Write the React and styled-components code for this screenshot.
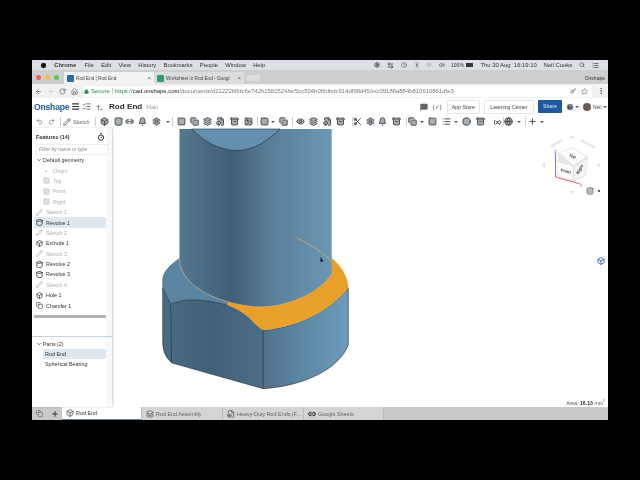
import React from 'react'
import styled, { createGlobalStyle } from 'styled-components'
import {
	ArrowLeft, ArrowRight, RotateCw, House, Lock, Key, Star, EllipsisVertical, Menu, ListChecks, Plus,
	MessageSquare, ChevronDown, Undo2, Redo2, Pencil, Box, Copy, Link2, Bell, Settings, Square, Layers,
	Cylinder, Eye, Image, Grid2x2, Clock, Archive, Globe, Timer, Search, List, ArrowLeftRight, Wifi,
	Volume2, Bluetooth, Scissors, FileBox, CircleHelp,
} from 'lucide-react'

const GlobalStyle = createGlobalStyle`
	html, body { margin: 0; padding: 0; background: #000; }
	body { font-family: 'Liberation Sans', Arial, sans-serif; }
`

const menuItems = ['File', 'Edit', 'View', 'History', 'Bookmarks', 'People', 'Window', 'Help']

// center x of every toolbar entry, the slot widths come from the gaps between them
const tools = [
	['sep', 95],
	[Box, 104], [Cylinder, 118], [Link2, 129], [Bell, 142], [Settings, 156], ['caret', 168], ['sep', 172],
	[Square, 181], [Copy, 194], [Layers, 207], [FileBox, 220], [Archive, 234], [Image, 248], ['sep', 257],
	[Grid2x2, 264], ['caret', 273], [Copy, 283], ['sep', 292],
	[Eye, 300], [Layers, 313], [FileBox, 327], [Archive, 340], ['sep', 352],
	[Scissors, 357], [Settings, 370], [Bell, 382], [Archive, 396], ['sep', 406],
	[Copy, 412], ['caret', 422], [Square, 432], [List, 446], ['caret', 456], [Clock, 466], [Archive, 480],
	['X', 496], ['sep', 503], [Globe, 508], ['caret', 519], ['sep', 525], [Plus, 532], ['caret', 542],
]

const features = [
	{ name: 'Origin', kind: 'geo', icon: 'dot' },
	{ name: 'Top', kind: 'geo', icon: 'plane' },
	{ name: 'Front', kind: 'geo', icon: 'plane' },
	{ name: 'Right', kind: 'geo', icon: 'plane' },
	{ name: 'Sketch 1', kind: 'off', icon: 'sketch' },
	{ name: 'Revolve 1', icon: 'revolve', active: true },
	{ name: 'Sketch 2', kind: 'off', icon: 'sketch' },
	{ name: 'Extrude 1', icon: 'extrude' },
	{ name: 'Sketch 3', kind: 'off', icon: 'sketch' },
	{ name: 'Revolve 2', icon: 'revolve' },
	{ name: 'Revolve 3', icon: 'revolve' },
	{ name: 'Sketch 4', kind: 'off', icon: 'sketch' },
	{ name: 'Hole 1', icon: 'extrude' },
	{ name: 'Chamfer 1', icon: 'chamfer' },
]

const FeatureIcon = ({ type }) => {
	if (type === 'dot') return <Glyph>•</Glyph>
	if (type === 'plane') return <Square size={7} color="#b9bec2" fill="#dfe2e4" strokeWidth={2} />
	if (type === 'sketch') return <Pencil size={7} color="#a7abae" strokeWidth={2.4} />
	if (type === 'revolve') return <Cylinder size={7} color="#3d4449" strokeWidth={3} />
	if (type === 'extrude') return <Box size={7} color="#3d4449" strokeWidth={2.6} />
	return <Copy size={7} color="#3d4449" strokeWidth={2.2} />
}

const App = () => {
	let last = 93.5
	return (
		<>
			<GlobalStyle />
			<Screen>
				<MenuBar>
					<Apple />
					<MenuStrong>Chrome</MenuStrong>
					{menuItems.map(name => (
						<span key={name}>{name}</span>
					))}
					<Status>
						<Settings size={6} strokeWidth={3} color="#333" />
						<ArrowLeftRight size={7} strokeWidth={2.4} color="#222" />
						<Clock size={6} color="#555" />
						<Bluetooth size={6} color="#555" />
						<Wifi size={6} color="#999" />
						<Volume2 size={6} color="#333" />
						<BatteryText>100%</BatteryText>
						<Battery />
						<StatusClock>Thu 30 Aug&nbsp; 16:19:10</StatusClock>
						<span>Neil Cooke</span>
						<Search size={6} color="#444" strokeWidth={2.4} />
						<List size={7} color="#444" strokeWidth={2.4} />
					</Status>
				</MenuBar>

				<TabStrip>
					<Lights>
						<Light $c="#ec5f57" />
						<Light $c="#f4bd4f" />
						<Light $c="#5fc453" />
					</Lights>
					<BrowserTab $active>
						<Favicon $c="#2a6aa8" />
						<TabName>Rod End | Rod End</TabName>
						<TabClose>×</TabClose>
					</BrowserTab>
					<BrowserTab>
						<Favicon $c="#2e9e6a" />
						<TabName>Worksheet in Rod End - Googl</TabName>
						<TabClose>×</TabClose>
					</BrowserTab>
					<NewTab />
					<Profile>Onshape</Profile>
				</TabStrip>

				<AddressBar>
					<ArrowLeft size={7} color="#777" strokeWidth={2.4} />
					<ArrowRight size={7} color="#c8c8c8" strokeWidth={2.4} />
					<RotateCw size={7} color="#666" strokeWidth={2.4} />
					<House size={7} color="#666" strokeWidth={2.4} />
					<UrlBox>
						<Lock size={5} color="#1d8a4a" fill="#1d8a4a" />
						<Secure>Secure</Secure>
						<UrlDivider />
						<UrlScheme>https://</UrlScheme>
						<UrlHost>cad.onshape.com</UrlHost>
						<UrlPath>/documents/d212226ffdc6e742b1560524/w/5cc504b06fdbdc914df98d45/e/c09186a884b810610861dfe3</UrlPath>
						<UrlIcons>
							<Key size={6} color="#666" strokeWidth={2.4} />
							<Star size={7} color="#666" />
						</UrlIcons>
					</UrlBox>
					<EllipsisVertical size={8} color="#666" strokeWidth={2.6} />
				</AddressBar>

				<AppHeader>
					<Logo>Onshape</Logo>
					<Menu size={9} color="#333" strokeWidth={2.8} />
					<ListChecks size={9} color="#444" strokeWidth={2} />
					<HeaderPlus>†₊</HeaderPlus>
					<DocName>Rod End</DocName>
					<Workspace>Main</Workspace>
					<HeaderRight>
						<MessageSquare size={8} color="#666" fill="#666" />
						<Braces>{'{✓}'}</Braces>
						<HeaderButton $w={33}>App Store</HeaderButton>
						<HeaderButton $w={50}>Learning Center</HeaderButton>
						<ShareButton>Share</ShareButton>
						<HelpGroup>
							<CircleHelp size={8} color="#fff" fill="#444" />
							<Caret />
						</HelpGroup>
						<UserGroup>
							<Avatar />
							<UserName>Neil</UserName>
							<Caret />
						</UserGroup>
					</HeaderRight>
				</AppHeader>

				<Toolbar>
					<Tool $w={11}><Undo2 size={7} color="#777" strokeWidth={2.4} /></Tool>
					<Tool $w={12}><Redo2 size={7} color="#777" strokeWidth={2.4} /></Tool>
					<ToolSep $w={6} />
					<SketchTool>
						<Pencil size={8} color="#444" strokeWidth={2.2} />
						<span>Sketch</span>
					</SketchTool>
					{tools.map(([T, x], i) => {
						const half = T === 'sep' ? 0.5 : T === 'caret' ? 2 : 5
						const w = x + half - last
						last = x + half
						if (T === 'sep') return <ToolSep key={i} $w={w} />
						if (T === 'caret') return <Tool key={i} $w={w}><Caret /></Tool>
						if (T === 'X') return <Tool key={i} $w={w}><Variable>(x)</Variable></Tool>
						return <Tool key={i} $w={w}><T size={9} color="#3e454a" fill="#a9aeb2" strokeWidth={2.4} /></Tool>
					})}
				</Toolbar>

				<Main>
					<FeaturePanel>
						<PanelTop>
							<FeaturesHead>
								<span>Features (14)</span>
								<Timer size={8} color="#222" strokeWidth={2.6} />
							</FeaturesHead>
							<FilterBox>Filter by name or type</FilterBox>
							<GroupRow><ChevronDown size={6} strokeWidth={2.6} />Default geometry</GroupRow>
							{features.map(f => (
								<FeatureRow key={f.name} $active={f.active} $indent={f.kind === 'geo'}>
									<IconSlot><FeatureIcon type={f.icon} /></IconSlot>
									<FeatureName $muted={f.kind}>{f.name}</FeatureName>
								</FeatureRow>
							))}
							<Rollback />
						</PanelTop>
						<PartsPanel>
							<GroupRow><ChevronDown size={6} strokeWidth={2.6} />Parts (2)</GroupRow>
							<PartRow $active>Rod End</PartRow>
							<PartRow>Spherical Bearing</PartRow>
						</PartsPanel>
					</FeaturePanel>

					<Viewport>
						<Model viewBox="112 128 496 279">
							<defs>
								<linearGradient id="cyl" x1="0" x2="1" y1="0" y2="0">
									<stop offset="0" stopColor="#54778f" />
									<stop offset="0.34" stopColor="#415f75" />
									<stop offset="0.6" stopColor="#5a7f98" />
									<stop offset="1" stopColor="#6b97b5" />
								</linearGradient>
								<linearGradient id="leftFace" x1="0" x2="1" y1="0" y2="0">
									<stop offset="0" stopColor="#496b82" />
									<stop offset="0.5" stopColor="#41607a" />
									<stop offset="1" stopColor="#4c6e86" />
								</linearGradient>
								<linearGradient id="rightFace" x1="0" x2="1" y1="0" y2="0">
									<stop offset="0" stopColor="#4f7189" />
									<stop offset="0.5" stopColor="#5f8aa6" />
									<stop offset="1" stopColor="#6c9ab8" />
								</linearGradient>
							</defs>
							{/* hex base */}
							<path d="M170.7 303.7 C178 301 186 299.5 193 299.7 C205 300 216 302 226.7 304.7 C240 310 247 315 252 321 C256 325 259 328 263.3 330.3 L263.3 388.7 L172 363 C166 358 162.7 352 162.7 341 L162.7 288 Z" fill="url(#leftFace)" stroke="#1e2f3c" strokeWidth="0.6" />
							<path d="M170.7 303.7 L171.5 363" fill="none" stroke="#1e2f3c" strokeWidth="0.6" />
							<path d="M263.3 330.3 C295 328 330 312 348.3 288 L348.3 344.7 C340 368 305 386 263.3 388.7 Z" fill="url(#rightFace)" stroke="#1e2f3c" strokeWidth="0.6" />
							<path d="M179.5 258.5 C170 265 162.7 272 162.7 280 L162.7 288 L170.7 303.7 C178 301 186 299.5 193 299.7 C205 300 216 302 226.7 304.7 L232 295 L240 280 Z" fill="#5a84a0" stroke="#1e2f3c" strokeWidth="0.4" />
							<path d="M226.7 304.7 C240 310 247 315 252 321 C256 325 259 328 263.3 330.3 C295 328 330 312 348.3 288 C348 275 340 265 331.7 258 L300 280 L232 295 Z" fill="#e9a02a" />
							{/* shaft */}
							<path d="M179.5 129 L331.7 129 L331.7 274 C318 295 285 307 260 307 C225 306 179.5 288 179.5 259 Z" fill="url(#cyl)" />
							<path d="M191.7 129 C205 143 222 150.5 236.7 150.5 C253 150.5 268 141 280 129 Z" fill="#6590ad" stroke="#1e2f3c" strokeWidth="0.6" />
							<path d="M179.5 259 C179.5 288 225 306 260 307 C285 307 318 295 331.7 274" fill="none" stroke="#c9b48c" strokeWidth="0.7" />
							<path d="M297 238 C312 245 325 254 331.7 262" fill="none" stroke="#d7a862" strokeWidth="0.8" />
							<path d="M320.5 257 L320.5 262.5 L322 261.3 L323.6 261.8 Z" fill="#111" />
						</Model>

						<ViewCube viewBox="540 130 64 70">
							<path d="M551 147 L562 140 M581 140 L595 148" stroke="#e4e6e8" strokeWidth="2.5" />
							<path d="M571.7 135 L569 138 L574.4 138 Z M542 165 L545 162 L545 168 Z M601 165 L598 162 L598 168 Z M571.7 194 L569 191 L574.4 191 Z" fill="#e0e2e4" />
							<path d="M558 153 L572 147 L588 157 L586 176 L573 182 L557 176 Z" fill="#e6e6e6" />
							<path d="M560 153 L572 148 L586 157 L573 165 Z" fill="#fbfbfb" />
							<path d="M558 162 L573 167 L572 180 L558 175 Z" fill="#fbfbfb" />
							<path d="M575 167 L587 159 L585 175 L574 180 Z" fill="#f6f6f6" />
							<CubeLabel x="572" y="157.5" transform="rotate(20 572 157.5)">Top</CubeLabel>
							<CubeLabel x="565.5" y="172.5" transform="rotate(15 565.5 172.5)">Front</CubeLabel>
							<CubeLabel x="581" y="170" transform="rotate(-60 581 170)">Right</CubeLabel>
							<path d="M555.5 153 L555.5 177" fill="none" stroke="#3a49a8" strokeWidth="0.7" />
							<path d="M555.5 177 L580 184" fill="none" stroke="#d0404a" strokeWidth="0.8" />
							<AxisZ x="555.5" y="153">Z</AxisZ>
							<AxisX x="580" y="187">X</AxisX>
						</ViewCube>
						<ViewMode>
							<Cylinder size={8} color="#666" fill="#bbb" />
							<Dot />
						</ViewMode>
						<RightTool>
							<Box size={8} color="#2a5d9a" strokeWidth={2.6} />
						</RightTool>
						<AreaLabel>Area: <b>16.13</b> mm<sup>2</sup></AreaLabel>
					</Viewport>
				</Main>

				<BottomBar>
					<BottomIcon><Copy size={7} color="#555" /></BottomIcon>
					<BottomIcon><Plus size={8} color="#333" strokeWidth={3} /></BottomIcon>
					<DocTab $w={80} $active><Box size={8} color="#333" />Rod End</DocTab>
					<DocTab $w={81}><Layers size={8} color="#444" />Rod End Assembly</DocTab>
					<DocTab $w={81}><FileBox size={8} color="#444" />Heavy-Duty Rod Ends (F...</DocTab>
					<DocTab $w={80}><Link2 size={8} color="#222" strokeWidth={3} />Google Sheets</DocTab>
				</BottomBar>
			</Screen>
		</>
	)
}

export default App

const Screen = styled.div`
	width: 576px;
	height: 360px;
	margin: 60px 32px;
	background: #fff;
	display: flex;
	flex-direction: column;
	overflow: hidden;
	filter: blur(0.4px);
	color: #333;
`
const MenuBar = styled.div`
	flex: 0 0 10px;
	display: flex;
	align-items: center;
	gap: 7.3px;
	padding-left: 9px;
	background: #dcdfe5;
	font-size: 5.8px;
	color: #333;
`
const Apple = styled.div`
	width: 5px;
	height: 5px;
	border-radius: 2px;
	margin-right: 1px;
	background: #111;
`
const MenuStrong = styled.span`
	font-weight: bold;
	margin-right: 1px;
`
const Status = styled.div`
	margin-left: auto;
	margin-right: 9px;
	display: flex;
	align-items: center;
	gap: 6.8px;
	font-size: 5.9px;
`
const BatteryText = styled.span`
	margin-left: -1px;
	font-size: 5px;
`
const Battery = styled.i`
	width: 7px;
	height: 4px;
	margin-left: -5px;
	background: #333;
`
const StatusClock = styled.span`
	margin-left: 1px;
`
const TabStrip = styled.div`
	flex: 0 0 14px;
	display: flex;
	align-items: flex-end;
	background: #cdced0;
`
const Lights = styled.div`
	display: flex;
	gap: 4px;
	width: 32px;
	padding: 0 0 4px 4px;
	box-sizing: border-box;
`
const Light = styled.i`
	width: 5px;
	height: 5px;
	border-radius: 50%;
	background: ${props => props.$c};
`
const BrowserTab = styled.div`
	width: 90px;
	height: 12px;
	display: flex;
	align-items: center;
	gap: 2px;
	padding: 0 3px;
	box-sizing: border-box;
	background: ${props => (props.$active ? '#f3f3f3' : '#dcdcdc')};
	font-size: 4.7px;
	color: #444;
`
const Favicon = styled.i`
	width: 7px;
	height: 7px;
	border-radius: 1px;
	flex: none;
	background: ${props => props.$c};
`
const TabName = styled.span`
	flex: 1;
	white-space: nowrap;
`
const TabClose = styled.span`
	color: #666;
	font-size: 6px;
`
const NewTab = styled.i`
	width: 13px;
	height: 6px;
	margin: 0 0 3px 3px;
	background: #dedede;
`
const Profile = styled.span`
	margin: 0 3px 3px auto;
	font-size: 5px;
	color: #333;
`
const AddressBar = styled.div`
	flex: 0 0 14px;
	display: flex;
	align-items: center;
	gap: 5px;
	padding: 0 3px;
	box-sizing: border-box;
	background: #f1f1f1;
`
const UrlBox = styled.div`
	flex: 1;
	height: 11px;
	display: flex;
	align-items: center;
	padding: 0 4px 0 1px;
	background: #fff;
	font-size: 5.95px;
	white-space: nowrap;
	overflow: hidden;
`
const Secure = styled.span`
	margin-left: 2px;
	color: #1d8a4a;
`
const UrlDivider = styled.i`
	width: 1px;
	height: 6px;
	margin: 0 2px;
	background: #ccc;
`
const UrlScheme = styled.span`
	color: #1d8a4a;
`
const UrlHost = styled.span`
	color: #222;
`
const UrlPath = styled.span`
	color: #777;
`
const UrlIcons = styled.div`
	margin-left: auto;
	display: flex;
	align-items: center;
	gap: 5px;
`
const AppHeader = styled.div`
	flex: 0 0 17px;
	display: flex;
	align-items: center;
	gap: 2px;
	padding: 0 1.5px 0 2px;
	box-sizing: border-box;
	background: #fff;
`
const Logo = styled.span`
	width: 35px;
	font-size: 8.6px;
	font-weight: bold;
	letter-spacing: -0.2px;
	color: #1f5a9c;
`
const HeaderPlus = styled.span`
	width: 10px;
	margin-left: 3px;
	font-size: 8px;
	color: #444;
`
const DocName = styled.span`
	margin-left: 1px;
	font-size: 8.1px;
	font-weight: bold;
	color: #2c2c2c;
`
const Workspace = styled.span`
	margin-left: 2px;
	font-size: 5.6px;
	color: #999;
`
const HeaderRight = styled.div`
	margin-left: auto;
	display: flex;
	align-items: center;
	gap: 3px;
`
const Braces = styled.span`
	font-size: 6px;
	margin: 0 1px 0 2px;
	color: #555;
`
const HeaderButton = styled.div`
	width: ${props => props.$w}px;
	height: 14px;
	line-height: 12px;
	margin-left: 1px;
	box-sizing: border-box;
	text-align: center;
	border: 1px solid #e6e6e6;
	border-radius: 1px;
	font-size: 5.2px;
	color: #444;
`
const ShareButton = styled.div`
	width: 24px;
	height: 13px;
	line-height: 13px;
	margin-left: 1px;
	text-align: center;
	border-radius: 1px;
	background: #1f5aa0;
	color: #dfe8f2;
	font-size: 5.2px;
`
const HelpGroup = styled.div`
	display: flex;
	align-items: center;
	gap: 1px;
	margin-left: 1px;
`
const UserGroup = styled.div`
	display: flex;
	align-items: center;
	gap: 1px;
	margin-left: 1px;
`
const Caret = styled.i`
	display: block;
	width: 0;
	height: 0;
	border-left: 2px solid transparent;
	border-right: 2px solid transparent;
	border-top: 2px solid #555;
`
const Avatar = styled.i`
	width: 8px;
	height: 8px;
	margin-right: 1px;
	border-radius: 50%;
	background: #6b5a55;
`
const UserName = styled.span`
	font-size: 5px;
	color: #444;
`
const Toolbar = styled.div`
	flex: 0 0 13px;
	display: flex;
	align-items: center;
	background: #fff;
`
const Tool = styled.div`
	width: ${props => props.$w}px;
	flex: none;
	display: flex;
	align-items: center;
	justify-content: flex-end;
`
const ToolSep = styled.div`
	width: ${props => props.$w}px;
	flex: none;
	height: 9px;
	background: linear-gradient(#ccc, #ccc) right center / 1px 9px no-repeat;
`
const SketchTool = styled.div`
	display: flex;
	align-items: center;
	gap: 2px;
	width: 32.5px;
	padding-left: 2px;
	box-sizing: border-box;
	flex: none;
	font-size: 5.4px;
	color: #666;
`
const Variable = styled.span`
	font-size: 6px;
	font-weight: bold;
	color: #333;
`
const Main = styled.div`
	flex: 1;
	min-height: 0;
	display: flex;
`
const FeaturePanel = styled.div`
	flex: 0 0 80px;
	display: flex;
	flex-direction: column;
	box-shadow: 1px 0 2px rgba(0, 0, 0, 0.18);
	z-index: 1;
	background: linear-gradient(to right, #fff 74px, #f7f8fa 74px);
`
const PanelTop = styled.div`
	flex: 0 0 209px;
	box-sizing: border-box;
	padding: 4px 6px 0 2px;
	border-bottom: 1px solid #c5d3de;
`
const FeaturesHead = styled.div`
	display: flex;
	align-items: center;
	justify-content: space-between;
	padding: 0 1px 0 2px;
	height: 9px;
	font-size: 5.4px;
	font-weight: bold;
	color: #333;
`
const FilterBox = styled.div`
	margin: 3px -2px 0 2px;
	height: 11px;
	line-height: 9px;
	padding-left: 2px;
	border: 1px solid #eee;
	box-sizing: border-box;
	background: #fff;
	font-size: 5px;
	font-style: italic;
	color: #8a8a8a;
`
const GroupRow = styled.div`
	display: flex;
	align-items: center;
	gap: 1px;
	height: 10.4px;
	padding-left: 2px;
	font-size: 5.4px;
	color: #333;
`
const FeatureRow = styled.div`
	display: flex;
	align-items: center;
	height: 10.4px;
	padding-left: ${props => (props.$indent ? 9 : 2)}px;
	background: ${props => (props.$active ? '#dfe8f0' : 'transparent')};
`
const IconSlot = styled.div`
	width: 10px;
	display: flex;
	align-items: center;
	flex: none;
`
const Glyph = styled.span`
	font-size: 6px;
	margin-left: 2px;
	color: #aaa;
`
const FeatureName = styled.span`
	font-size: 5.4px;
	color: ${props => (props.$muted ? '#a8acaf' : '#333')};
`
const Rollback = styled.div`
	height: 3px;
	margin-top: 4px;
	background: #b3b3b3;
`
const PartsPanel = styled.div`
	flex: 1;
	padding: 2px 6px 0 2px;
`
const PartRow = styled.div`
	margin-left: 9px;
	padding-left: 2px;
	height: 10px;
	line-height: 10px;
	font-size: 5.4px;
	color: #333;
	background: ${props => (props.$active ? '#dfe8f0' : 'transparent')};
`
const Viewport = styled.div`
	flex: 1;
	position: relative;
	background: #fff;
`
const Model = styled.svg`
	display: block;
	width: 100%;
	height: 100%;
`
const ViewCube = styled.svg`
	position: absolute;
	left: 428px;
	top: 2px;
	width: 64px;
	height: 70px;
`
const CubeLabel = styled.text`
	font-size: 4px;
	font-weight: bold;
	text-anchor: middle;
	fill: #333;
`
const AxisZ = styled.text`
	font-size: 4px;
	text-anchor: middle;
	fill: #3a49a8;
`
const AxisX = styled.text`
	font-size: 4px;
	fill: #d0404a;
`
const ViewMode = styled.div`
	position: absolute;
	left: 474px;
	top: 59px;
	display: flex;
	align-items: center;
	gap: 4px;
`
const Dot = styled.i`
	width: 2px;
	height: 2px;
	background: #222;
	border-radius: 50%;
`
const RightTool = styled.div`
	position: absolute;
	right: 3px;
	top: 129px;
	display: flex;
`
const AreaLabel = styled.div`
	position: absolute;
	right: 3px;
	bottom: 1px;
	font-size: 5.2px;
	color: #555;
	sup { font-size: 3.5px; line-height: 0; }
	b { color: #333; }
`
const BottomBar = styled.div`
	flex: 0 0 13px;
	display: flex;
	align-items: stretch;
	background: #c9c9c9;
`
const BottomIcon = styled.div`
	width: 15px;
	display: flex;
	align-items: center;
	justify-content: center;
`
const DocTab = styled.div`
	width: ${props => props.$w}px;
	box-sizing: border-box;
	display: flex;
	align-items: center;
	gap: 2px;
	padding-left: 4px;
	font-size: 5.4px;
	white-space: nowrap;
	overflow: hidden;
	color: ${props => (props.$active ? '#333' : '#666')};
	background: ${props => (props.$active ? '#fff' : '#d4d4d4')};
	border-right: 1px solid #bbb;
	border-bottom: ${props => (props.$active ? '1px solid #5d7f9c' : 'none')};
`
